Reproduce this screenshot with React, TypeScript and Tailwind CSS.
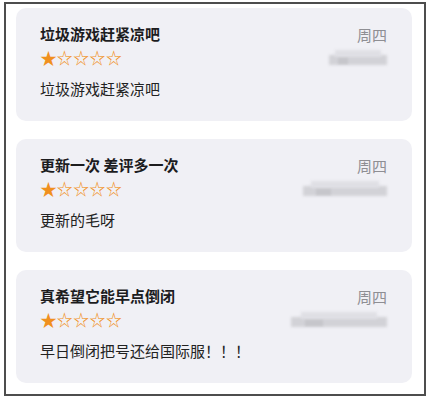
import React from 'react';

interface Review {
  title: string;
  body: string;
  date: string;
  rating: number;
  nameWidth: number;
}

const reviews: Review[] = [
  { title: '垃圾游戏赶紧凉吧', body: '垃圾游戏赶紧凉吧', date: '周四', rating: 1, nameWidth: 58 },
  { title: '更新一次 差评多一次', body: '更新的毛呀', date: '周四', rating: 1, nameWidth: 84 },
  { title: '真希望它能早点倒闭', body: '早日倒闭把号还给国际服！！！', date: '周四', rating: 1, nameWidth: 96 },
];

const Stars: React.FC<{ rating: number }> = ({ rating }) => (
  <div className="flex h-[18px] items-center text-[16px] leading-none text-[#f0901e]">
    {[0, 1, 2, 3, 4].map((i) => (
      <span key={i} className={`w-[16.4px] text-center ${i < rating ? 'text-[17px]' : ''}`}>
        {i < rating ? '★' : '☆'}
      </span>
    ))}
  </div>
);

// reviewer nickname is pixelated out
const HiddenName: React.FC<{ width: number }> = ({ width }) => (
  <div className="relative h-[15px]" style={{ width }}>
    <div className="absolute inset-x-0 bottom-0 top-[5px] bg-[#d2d2d7] blur-[1.5px]" />
    <div className="absolute inset-x-[10%] top-0 h-[7px] bg-[#dfdfe4] blur-[1.5px]" />
    <div className="absolute left-[15%] bottom-[1px] h-[6px] w-[18%] bg-[#c6c6cb] blur-[1px]" />
  </div>
);

const ReviewCard: React.FC<{ review: Review }> = ({ review }) => (
  <div className="h-[113px] w-[396px] rounded-[10px] bg-[#f0f0f5] pl-[24px] pr-[25px] pt-[16px]">
    <div className="flex items-start justify-between">
      <div>
        <div className="h-[20px] text-[15px] font-bold leading-[20px] text-[#1c1c1e]">{review.title}</div>
        <div className="mt-[4px]">
          <Stars rating={review.rating} />
        </div>
      </div>
      <div className="flex flex-col items-end">
        <div className="h-[20px] pt-[1px] text-[15px] font-normal leading-[20px] text-[#8e8e93]">{review.date}</div>
        <div className="mt-[6px]">
          <HiddenName width={review.nameWidth} />
        </div>
      </div>
    </div>
    <div className="mt-[13px] text-[15px] leading-[20px] text-[#222]">{review.body}</div>
  </div>
);

export default function App() {
  return (
    <div
      className="h-[400px] w-[434px] bg-white pl-[4px] pt-[2px]"
      style={{ fontFamily: '"Noto Sans CJK SC", "Noto Sans", sans-serif' }}
    >
      <div className="flex h-[394px] w-[422px] flex-col gap-[18px] border-2 border-[#4d4d4d] pl-[10px] pt-[4px]">
        {reviews.map((r, i) => (
          <ReviewCard key={i} review={r} />
        ))}
      </div>
    </div>
  );
}
